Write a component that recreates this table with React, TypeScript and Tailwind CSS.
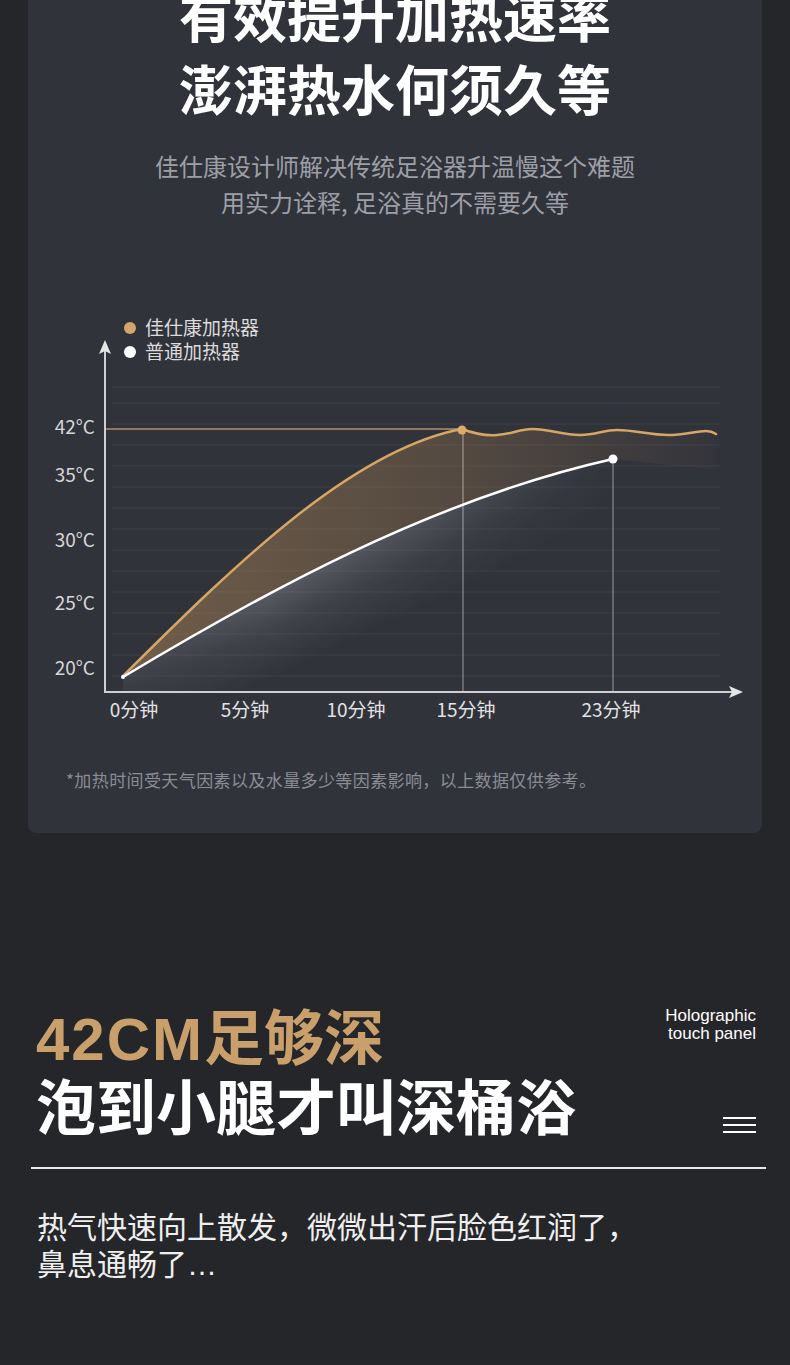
import React from 'react';

const gridLines = [387, 403, 424, 445, 466, 487, 508, 529, 550, 571, 592, 613, 634, 655, 676];

const yLabels = [
  { text: '42°C', y: 427 },
  { text: '35°C', y: 475 },
  { text: '30°C', y: 540 },
  { text: '25°C', y: 603 },
  { text: '20°C', y: 668 },
];

const xLabels = [
  { text: '0分钟', x: 134 },
  { text: '5分钟', x: 245 },
  { text: '10分钟', x: 356 },
  { text: '15分钟', x: 466 },
  { text: '23分钟', x: 611 },
];

const orangeCurve = 'M123,676 C230,570 350,450 462,429';
const wave =
  'C475,434 485,436 497,435 C512,434 520,429 532,429 C550,429 562,435 580,435 C596,435 604,430 617,430 C635,430 650,435 668,435 C684,435 696,431 706,431 C710,431 713,432 716,434';
const whiteCurve = 'M123,677 C260,595 430,500 613,459';

function HeatChart() {
  return (
    <svg
      width={734}
      height={430}
      viewBox="28 300 734 430"
      className="block font-['Noto_Sans_CJK_SC',sans-serif]"
    >
      <defs>
        <linearGradient id="band" x1="123" y1="0" x2="716" y2="0" gradientUnits="userSpaceOnUse">
          <stop offset="0" stopColor="#c9995c" stopOpacity="0.42" />
          <stop offset="0.55" stopColor="#a9804f" stopOpacity="0.3" />
          <stop offset="1" stopColor="#a9804f" stopOpacity="0.02" />
        </linearGradient>
        <linearGradient id="haze" x1="300" y1="572" x2="336" y2="650" gradientUnits="userSpaceOnUse">
          <stop offset="0" stopColor="#d7dbe4" stopOpacity="0.26" />
          <stop offset="0.45" stopColor="#d7dbe4" stopOpacity="0.1" />
          <stop offset="1" stopColor="#d7dbe4" stopOpacity="0" />
        </linearGradient>
        <linearGradient id="hazeFade" x1="123" y1="0" x2="613" y2="0" gradientUnits="userSpaceOnUse">
          <stop offset="0" stopColor="#fff" stopOpacity="0.5" />
          <stop offset="0.3" stopColor="#fff" stopOpacity="1" />
          <stop offset="0.65" stopColor="#fff" stopOpacity="0.7" />
          <stop offset="1" stopColor="#fff" stopOpacity="0.1" />
        </linearGradient>
        <mask id="hazeMask" maskUnits="userSpaceOnUse" x="100" y="400" width="540" height="300">
          <rect x="100" y="400" width="540" height="300" fill="url(#hazeFade)" />
        </mask>
      </defs>

      {/* faint grid */}
      {gridLines.map((y) => (
        <line key={y} x1={112} x2={720} y1={y} y2={y} stroke="#ffffff" strokeOpacity={0.045} strokeWidth={1.5} />
      ))}

      {/* legend */}
      <circle cx={130} cy={328} r={6} fill="#d3a66c" />
      <text x={145} y={335} fontSize={19} fill="#dcdcdc">佳仕康加热器</text>
      <circle cx={130} cy={352} r={6} fill="#ffffff" />
      <text x={145} y={359} fontSize={19} fill="#dcdcdc">普通加热器</text>

      {/* fills */}
      <path d={`${whiteCurve} L613,692 L123,692 Z`} fill="url(#haze)" mask="url(#hazeMask)" />
      <path d={`${orangeCurve} ${wave} L716,470 L613,459 C430,500 260,595 123,677 Z`} fill="url(#band)" />

      {/* 42°C reference */}
      <line x1={106} x2={462} y1={429} y2={429} stroke="#8d7864" strokeWidth={2} />

      {/* markers */}
      <line x1={463} x2={463} y1={431} y2={692} stroke="#ffffff" strokeOpacity={0.35} strokeWidth={1.5} />
      <line x1={613} x2={613} y1={461} y2={692} stroke="#ffffff" strokeOpacity={0.35} strokeWidth={1.5} />

      {/* axes */}
      <line x1={105} x2={105} y1={348} y2={692} stroke="#cfd0d3" strokeWidth={2} />
      <path d="M105,340 L99,354 L105,351 L111,354 Z" fill="#e6e6e6" />
      <line x1={104} x2={736} y1={692} y2={692} stroke="#cfd0d3" strokeWidth={2} />
      <path d="M743,692 L729,686 L732,692 L729,698 Z" fill="#e6e6e6" />

      {/* curves */}
      <path d={`${orangeCurve} ${wave}`} fill="none" stroke="#d6a664" strokeWidth={2.5} strokeLinecap="round" />
      <path d={whiteCurve} fill="none" stroke="#ffffff" strokeWidth={2.5} strokeLinecap="round" />
      <circle cx={462} cy={430} r={4.5} fill="#dcab6a" />
      <circle cx={613} cy={459} r={4.5} fill="#ffffff" />
      <circle cx={123} cy={677} r={2} fill="#ffffff" />

      {/* labels */}
      {yLabels.map((l) => (
        <text key={l.text} x={95} y={l.y + 6.5} fontSize={19} fill="#d6d6d6" textAnchor="end">
          {l.text}
        </text>
      ))}
      {xLabels.map((l) => (
        <text key={l.text} x={l.x} y={717} fontSize={19} fill="#e2e2e2" textAnchor="middle">
          {l.text}
        </text>
      ))}
    </svg>
  );
}

export default function App() {
  return (
    <div className="w-[790px] min-h-[1365px] overflow-hidden bg-[#252629] font-['Noto_Sans_CJK_SC',sans-serif]">
      {/* heating speed card */}
      <section className="mx-[28px] rounded-b-lg bg-[#31333b] pb-[41px]">
        <h1 className="-mt-[22px] text-center text-[54px] leading-[73px] font-bold text-white">
          有效提升加热速率
          <br />
          澎湃热水何须久等
        </h1>
        <p className="mt-[24px] text-center text-[24px] leading-[36px] text-[#9d9fa6]">
          佳仕康设计师解决传统足浴器升温慢这个难题
          <br />
          用实力诠释, 足浴真的不需要久等
        </p>
        <div className="mt-[80px]">
          <HeatChart />
        </div>
        <p className="mt-[38px] pl-[38px] text-[17px] leading-[24px] tracking-[0.4px] text-[#8b8d93]">
          *加热时间受天气因素以及水量多少等因素影响，以上数据仅供参考。
        </p>
      </section>

      {/* depth section */}
      <section className="pt-[166px]">
        <div className="flex justify-between pl-[36px] pr-[34px]">
          <div className="text-[60px] leading-[70px] font-bold">
            <div className="text-[#c9a06b]">
              <span className="font-['Liberation_Sans',sans-serif] leading-[40px] tracking-[2px]">42CM</span>足够深
            </div>
            <div className="text-white">泡到小腿才叫深桶浴</div>
          </div>
          <div className="flex flex-col items-end justify-between pt-[8px] pb-[6px]">
            <div className="text-right font-['Liberation_Sans',sans-serif] text-[17px] leading-[18px] text-white">
              Holographic
              <br />
              touch panel
            </div>
            <div className="flex flex-col gap-[5px]">
              <span className="block h-[2px] w-[33px] bg-white" />
              <span className="block h-[2px] w-[33px] bg-white" />
              <span className="block h-[2px] w-[33px] bg-white" />
            </div>
          </div>
        </div>
        <div className="mt-[28px] ml-[31px] mr-[24px] h-[1.5px] bg-white/90" />
        <p className="mt-[38px] pl-[37px] text-[30px] leading-[37px] text-[#efefef]">
          热气快速向上散发，微微出汗后脸色红润了，
          <br />
          鼻息通畅了<span className="font-['Liberation_Sans',sans-serif]">…</span>
        </p>
      </section>
    </div>
  );
}
